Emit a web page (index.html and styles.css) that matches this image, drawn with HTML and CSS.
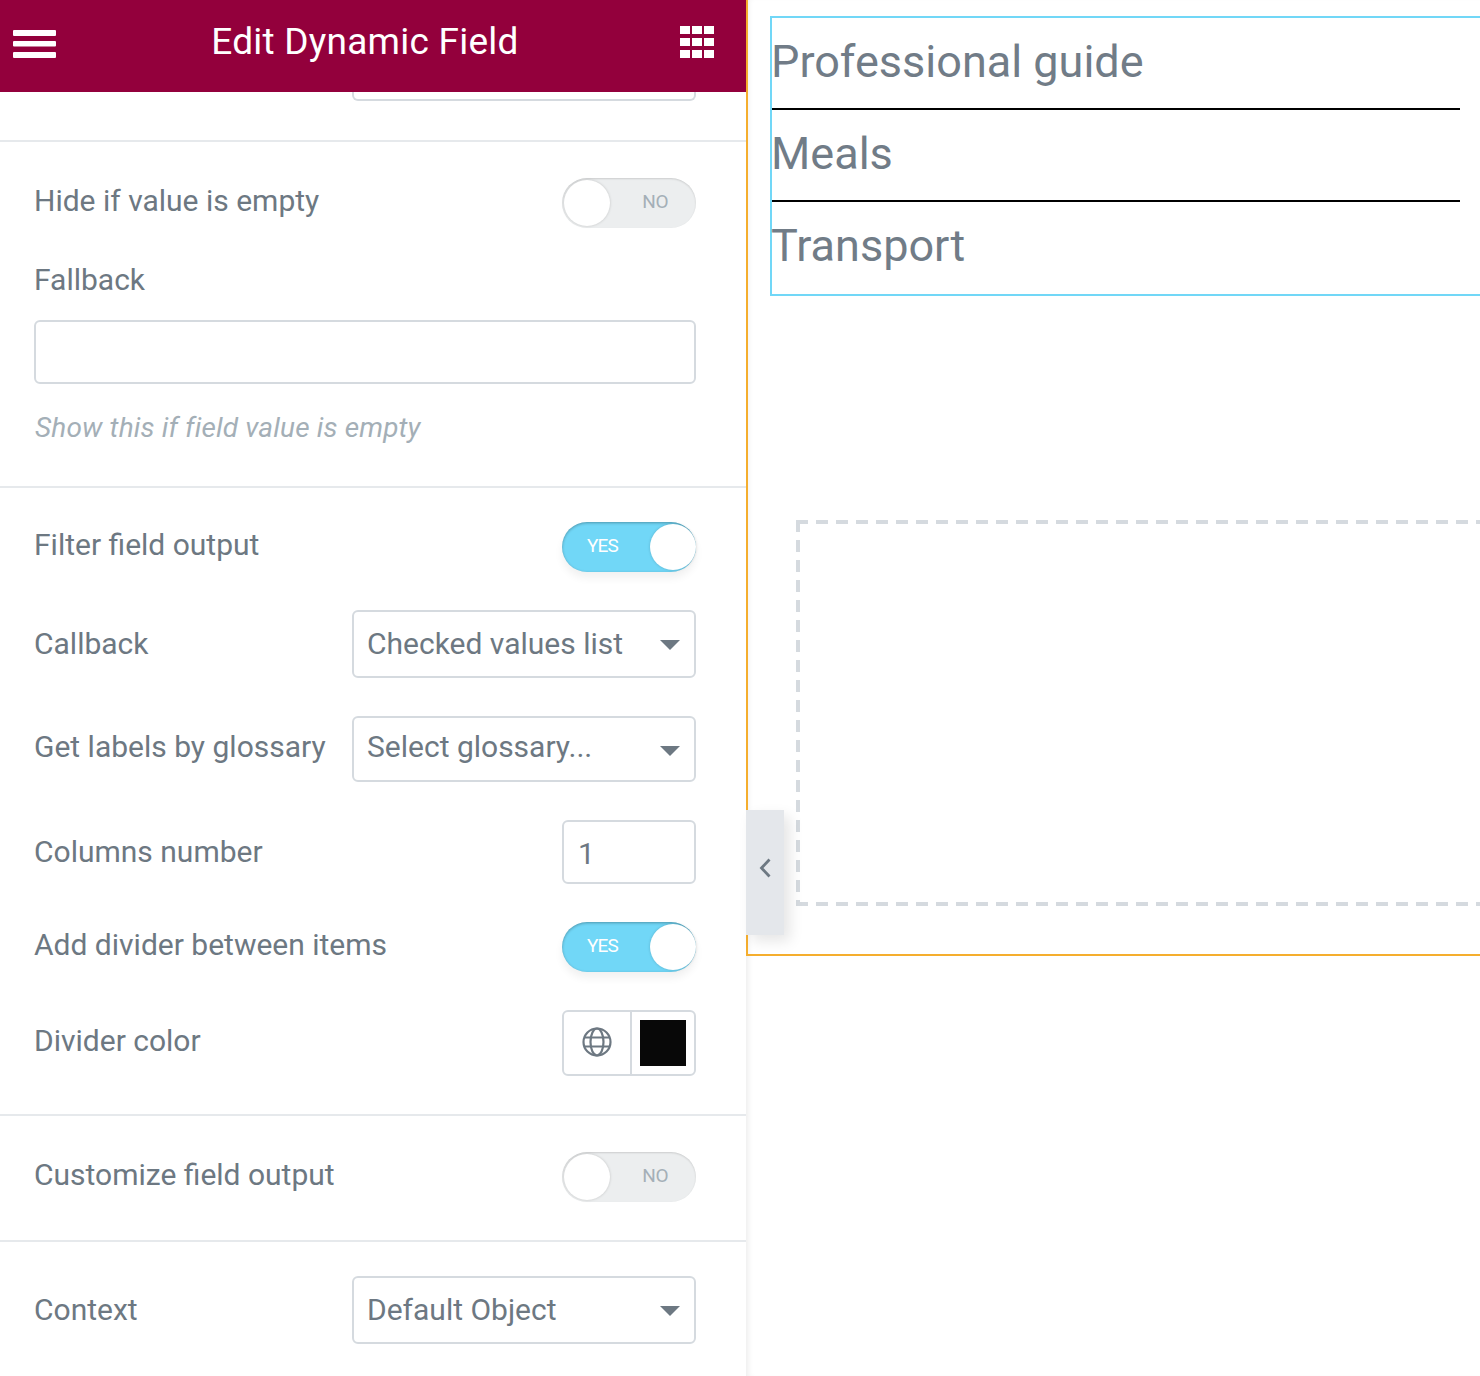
FILE: index.html
```html
<!DOCTYPE html>
<html lang="en">
<head>
<meta charset="utf-8">
<title>Edit Dynamic Field</title>
<link rel="stylesheet" href="styles.css">
</head>
<body>
<div class="app">
  <aside class="panel">
    <header class="head">
      <svg class="burger" width="43" height="28" viewBox="0 0 43 28"><rect x="0" y="0" width="43" height="6" rx="1"/><rect x="0" y="11" width="43" height="5.500" rx="1"/><rect x="0" y="22" width="43" height="6" rx="1"/></svg>
      <h1 class="title">Edit Dynamic Field</h1>
      <svg class="apps" width="34" height="32" viewBox="0 0 34 32"><rect x="0" y="0" width="10" height="8"/><rect x="12" y="0" width="10" height="8"/><rect x="24" y="0" width="10" height="8"/><rect x="0" y="12" width="10" height="8"/><rect x="12" y="12" width="10" height="8"/><rect x="24" y="12" width="10" height="8"/><rect x="0" y="24" width="10" height="8"/><rect x="12" y="24" width="10" height="8"/><rect x="24" y="24" width="10" height="8"/></svg>
    </header>
    <section class="sec sec-stub"><div class="stub"></div></section>
    <section class="sec sec-hide">
      <div class="row r-toggle"><span class="lab lab-up">Hide if value is empty</span><span class="tog"><span class="knob"></span><span class="tog-no">NO</span></span></div>
      <div class="lab lab-fallback">Fallback</div>
      <div class="inp inp-full"></div>
      <div class="hint">Show this if field value is empty</div>
    </section>
    <section class="sec sec-filter">
      <div class="row r-toggle"><span class="lab lab-up">Filter field output</span><span class="tog on"><span class="tog-yes">YES</span><span class="knob"></span></span></div>
      <div class="row r-callback"><span class="lab">Callback</span><div class="sel sel-tall"><span>Checked values list</span><i class="caret"></i></div></div>
      <div class="row r-gloss"><span class="lab lab-up">Get labels by glossary</span><div class="sel sel-short"><span>Select glossary...</span><i class="caret"></i></div></div>
      <div class="row r-cols"><span class="lab">Columns number</span><div class="inp inp-num">1</div></div>
      <div class="row r-div"><span class="lab lab-up">Add divider between items</span><span class="tog on"><span class="tog-yes">YES</span><span class="knob"></span></span></div>
      <div class="row r-color"><span class="lab lab-up">Divider color</span>
        <div class="color">
          <span class="globe"><svg class="globe-icon" width="32" height="32" viewBox="0 0 32 32" fill="none" stroke="#6d7882" stroke-width="2.200"><circle cx="16" cy="16" r="13.500"/><ellipse cx="16" cy="16" rx="6.500" ry="13.500"/><path d="M3.500 11.500h25M3.500 20.500h25"/></svg></span>
          <span class="swatch-cell"><span class="swatch"></span></span>
        </div>
      </div>
    </section>
    <section class="sec sec-custom">
      <div class="row r-toggle"><span class="lab lab-up">Customize field output</span><span class="tog"><span class="knob"></span><span class="tog-no">NO</span></span></div>
    </section>
    <section class="sec sec-context">
      <div class="row"><span class="lab">Context</span><div class="sel sel-tall"><span>Default Object</span><i class="caret"></i></div></div>
    </section>
  </aside>
  <main class="preview">
    <div class="frame">
      <ul class="list">
        <li class="item">Professional guide</li>
        <li class="item">Meals</li>
        <li class="item">Transport</li>
      </ul>
      <div class="drop"></div>
      <button class="collapse" aria-label="Collapse"><svg width="12" height="20" viewBox="0 0 12 20" fill="none" stroke="#6d7882" stroke-width="2.800"><path d="M10.500 1.500 2.500 10l8 8.500"/></svg></button>
    </div>
  </main>
</div>
</body>
</html>
```
FILE: styles.css
```css
* { box-sizing: border-box; }
html, body { margin: 0; height: 100%; }
body { width: 1480px; height: 1376px; overflow: hidden; background: #fff; font-family: Roboto, "Liberation Sans", sans-serif; color: #6d7882; }
.app { display: flex; height: 1376px; }
.panel { width: 746px; flex: none; height: 1376px; overflow: hidden; background: #fff; position: relative; }
.head { height: 92px; background: #93003c; display: flex; align-items: center; justify-content: space-between; padding: 0 32px 0 13px; color: #fff; }
.burger { fill: #fff; margin-bottom: 4px; }
.apps { fill: #fff; margin-bottom: 8px; }
.title { margin: 0 6px 10px 0; font-size: 37px; font-weight: 400; letter-spacing: 0.24px; line-height: 1; }
.sec { border-bottom: 2px solid #e6e9ec; padding: 0 50px 0 34px; }
.sec-stub { height: 50px; display: flex; justify-content: flex-end; align-items: flex-start; }
.stub { width: 344px; height: 9px; border: 2px solid #d5dadf; border-top: 0; border-radius: 0 0 6px 6px; }
.sec-hide { height: 346px; padding-top: 36px; }
.sec-filter { height: 628px; padding-top: 34px; }
.sec-custom { height: 126px; padding-top: 36px; }
.sec-context { border-bottom: 0; padding-top: 34px; }
.row { display: flex; justify-content: space-between; align-items: center; }
.lab { font-size: 30px; line-height: 36px; }
.lab-up { padding-bottom: 4px; }
.lab-fallback { margin-top: 34px; }
.inp { border: 2px solid #d5dadf; border-radius: 6px; font-size: 30px; }
.inp-full { height: 64px; margin-top: 22px; }
.hint { font-size: 28px; font-style: italic; color: #a4afb7; margin-top: 26px; padding-left: 1px; line-height: 36px; letter-spacing: 0.15px; }
.r-callback { margin-top: 38px; }
.r-gloss { margin-top: 38px; }
.r-cols { margin-top: 38px; }
.r-div { margin-top: 38px; }
.r-color { margin-top: 38px; }
.inp-num { width: 134px; height: 64px; display: flex; align-items: center; padding: 2px 14px 0; }
.sel { width: 344px; height: 66px; border: 2px solid #d5dadf; border-radius: 6px; display: flex; align-items: center; justify-content: space-between; padding: 0 14px 2px 13px; font-size: 30px; }
.sel-tall { height: 68px; }
.sel-short span { padding-bottom: 4px; }
.sel-short .caret { margin-top: 6px; }
.caret { width: 0; height: 0; border-left: 10px solid transparent; border-right: 10px solid transparent; border-top: 10px solid #6d7882; margin-top: 4px; }
.tog { width: 134px; height: 50px; border-radius: 25px; background: #eceeef; box-shadow: inset 0 1px 2px rgba(0,0,0,.14); display: flex; align-items: center; justify-content: space-between; position: relative; flex: none; }
.knob { width: 46px; height: 46px; border-radius: 50%; background: #fff; margin: 0 2px; box-shadow: 0 0 3px rgba(0,0,0,.18); }
.tog-no { font-size: 19px; color: #a4afb7; margin-right: 28px; letter-spacing: -0.5px; margin-bottom: 3px; }
.tog.on { background: #71d7f7; box-shadow: inset 0 1px 3px rgba(0,0,0,.3), 0 6px 8px rgba(0,0,0,.06); }
.tog.on .knob { margin: 0; }
.tog-yes { font-size: 19px; color: #fff; margin-left: 25px; letter-spacing: -0.8px; margin-bottom: 3px; }
.color { width: 134px; height: 66px; border: 2px solid #d5dadf; border-radius: 6px; display: flex; }
.globe { width: 68px; display: flex; align-items: center; justify-content: center; border-right: 2px solid #d5dadf; }
.globe-icon { margin-bottom: 2px; }
.swatch-cell { flex: 1; display: flex; align-items: center; justify-content: center; }
.swatch { width: 46px; height: 46px; background: #080808; }
.preview { flex: 1; min-width: 0; box-shadow: inset 6px 0 6px -4px rgba(0,0,0,.08); }
.frame { height: 956px; border-left: 2px solid #f5ae2e; border-bottom: 2px solid #f5ae2e; padding: 16px 0 0 22px; position: relative; }
.list { list-style: none; margin: 0 -20px 0 0; padding: 0; height: 280px; border: 2px solid #71d7f7; }
.item { height: 92px; width: 688px; font-size: 45px; line-height: 88px; color: #717c87; text-indent: -1px; }
.item + .item { border-top: 2px solid #000; }
.item:first-child { height: 90px; }
.drop {
  margin: 224px -20px 0 26px;
  height: 386px;
  background:
    repeating-linear-gradient(90deg, #d5dadf 0 12px, transparent 12px 20px) left top / 100% 4px no-repeat,
    repeating-linear-gradient(90deg, #d5dadf 0 12px, transparent 12px 20px) left bottom / 100% 4px no-repeat,
    repeating-linear-gradient(180deg, #d5dadf 0 12px, transparent 12px 20px) left top / 4px 100% no-repeat;
}
.collapse { position: absolute; left: -2px; top: 810px; width: 38px; height: 125px; border: 0; padding: 0 0 10px; background: #e4e7eb; box-shadow: 6px 6px 14px rgba(0,0,0,.1); display: flex; align-items: center; justify-content: center; }
```
